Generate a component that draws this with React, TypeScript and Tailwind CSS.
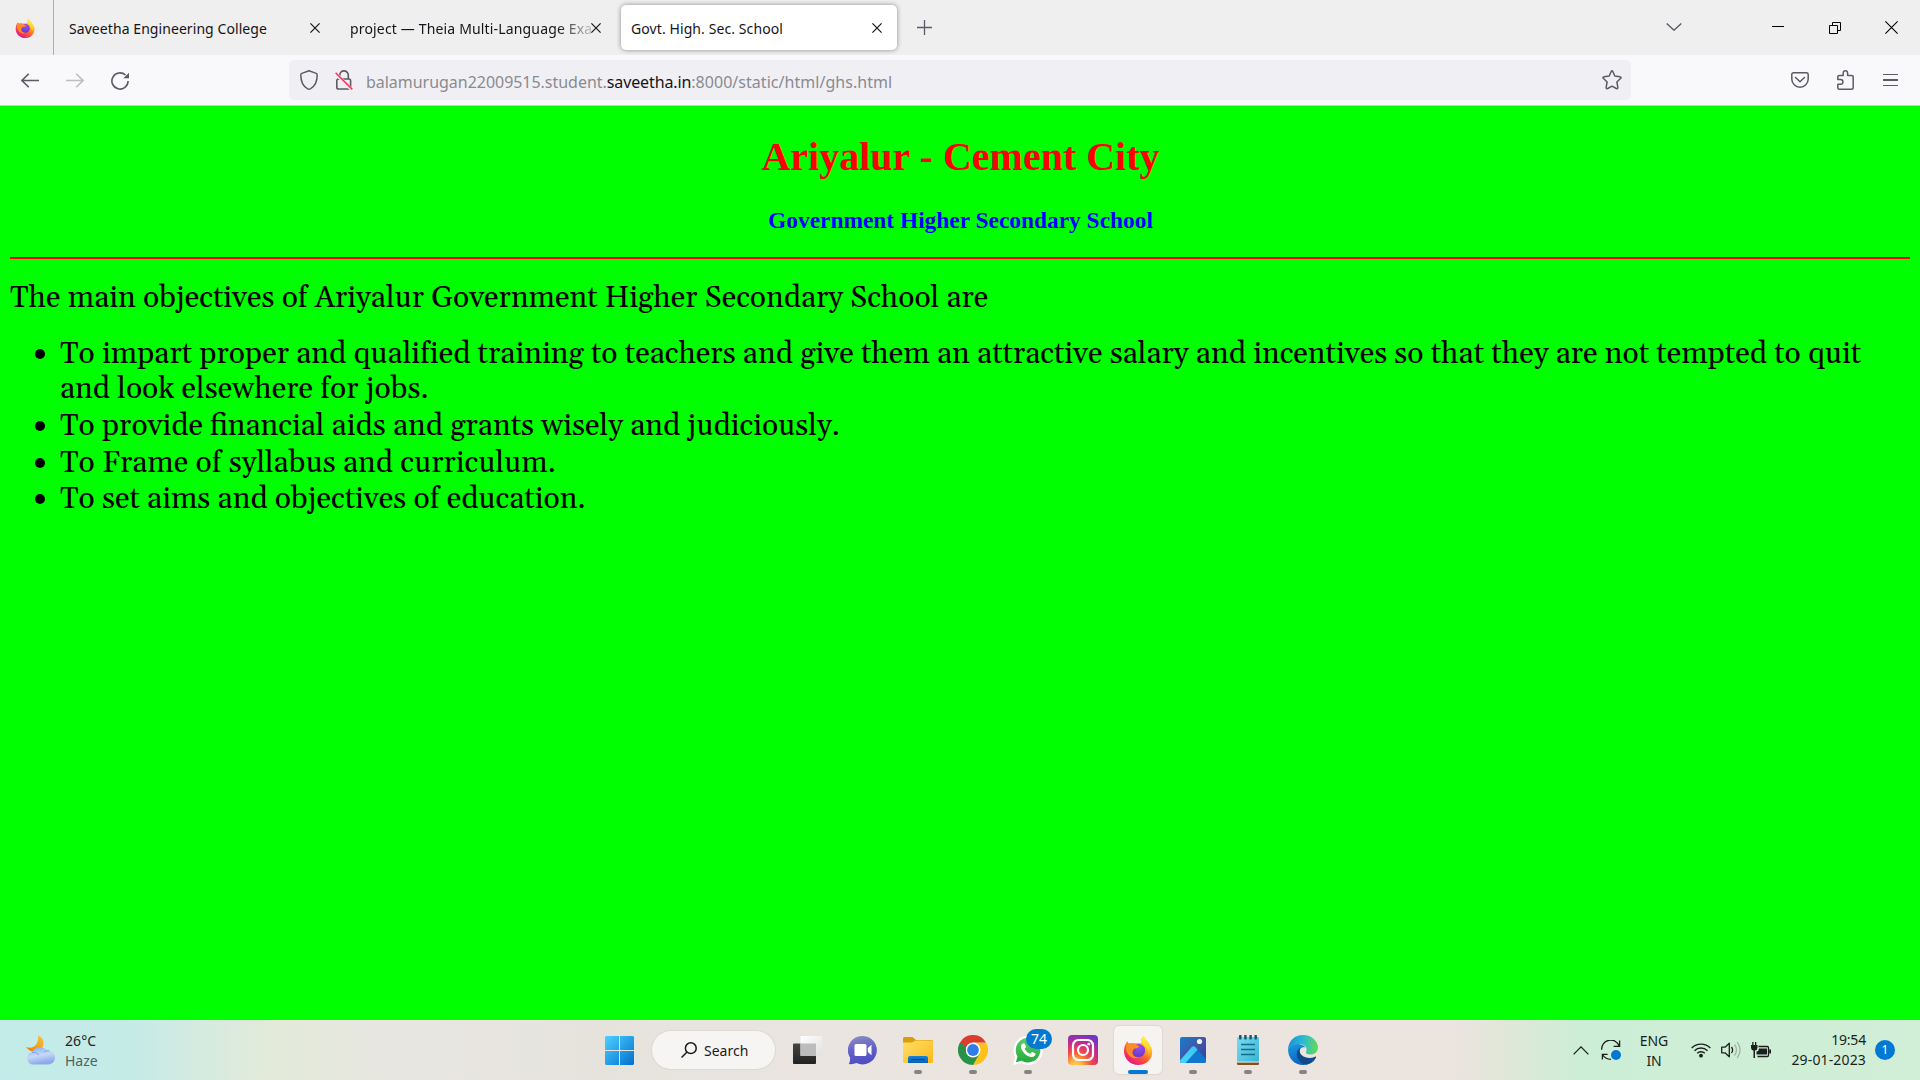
import React from "react";

type SvgProps = { className?: string };

function Firefox({ className }: SvgProps) {
  return (
    <svg className={className} viewBox="0 0 30 30">
      <defs>
        <linearGradient id="ffBody" x1="0.85" y1="0.08" x2="0.25" y2="0.95">
          <stop offset="0" stopColor="#fff44f" />
          <stop offset="0.35" stopColor="#ffa91e" />
          <stop offset="0.62" stopColor="#ff5a36" />
          <stop offset="1" stopColor="#e31587" />
        </linearGradient>
        <linearGradient id="ffFlame" x1="0.6" y1="0" x2="0.5" y2="1">
          <stop offset="0" stopColor="#fff44f" />
          <stop offset="0.6" stopColor="#ffd02e" />
          <stop offset="1" stopColor="#ff8a1e" />
        </linearGradient>
        <radialGradient id="ffGlobe" cx="0.55" cy="0.25" r="0.8">
          <stop offset="0" stopColor="#a34af0" />
          <stop offset="1" stopColor="#5b3bc4" />
        </radialGradient>
      </defs>
      <path d="M4.5 6.2C4.8 7.4 5.3 8 6 8.6 7.6 7.9 9.5 7.8 11 8.2L18 8C17.5 4.500 19 2 21 .8 21.500 4 24 5.500 25.500 7.800 26.200 8.400 26.500 9 26.800 9.800 29.500 14 30 18 28.200 22 26 27 21 30 15.500 30 7.500 30 1 24 1 16 1 12.500 2.200 8.800 4.500 6.200Z" fill="url(#ffBody)" />
      <circle cx="15.500" cy="15.500" r="6.600" fill="url(#ffGlobe)" />
      <path d="M18 8C17.500 4.500 19 2 21 .8 21.500 4 24 5.500 25.500 7.800 28.500 12.500 28.300 18 25 22 26 16 23.500 12 18 8Z" fill="url(#ffFlame)" />
      <path d="M3.500 7.500C6 9.200 8 8.500 10.500 8.800 13 9 14.500 10.300 16.200 11.500 15.500 12.800 13.500 13.200 12 13.600 10.500 14 10 15.200 9.500 17 8.500 20 12 22.500 15.500 22.300 10 25.500 4 20 3 14Z" fill="#ff8c26" />
    </svg>
  );
}

function CloseIcon({ className }: SvgProps) {
  return (
    <svg className={className} viewBox="0 0 10 10" fill="none" stroke="currentColor" strokeWidth="1.2">
      <path d="M.4.4 9.600 9.600M9.600.4.4 9.600" />
    </svg>
  );
}

function TabStrip() {
  return (
    <div className="flex h-[55px] w-full bg-[#efefef] text-[14px] text-[#15141a]">
      <div className="flex w-[53px] shrink-0 items-center pl-[15px]">
        <Firefox className="size-5" />
      </div>
      <div className="w-px shrink-0 bg-[#aeaeae]" />
      <div className="flex h-[55px] w-[281px] shrink-0 items-center pl-[15px]">
        <span className="w-[241px] whitespace-nowrap pt-[3px] leading-5 tracking-[0.07px]">Saveetha Engineering College</span>
        <CloseIcon className="size-2.5" />
      </div>
      <div className="flex h-[55px] w-[286px] shrink-0 items-center pl-[15px]">
        <span className="w-[241px] overflow-hidden whitespace-nowrap pt-[3px] leading-5 tracking-[0.16px] [mask-image:linear-gradient(to_right,#000_86%,rgba(0,0,0,0.2)_100%)]">
          project — Theia Multi-Language Exam
        </span>
        <CloseIcon className="size-2.5" />
      </div>
      <div className="mt-[5px] flex h-[45px] w-[276px] shrink-0 items-center rounded-[5px] bg-white pl-2.5 shadow-[0_0_5px_rgba(0,0,0,0.42)]">
        <span className="w-[241px] whitespace-nowrap pt-[3px] leading-5 tracking-[0.09px]">Govt. High. Sec. School</span>
        <CloseIcon className="size-2.5" />
      </div>
      <div className="flex flex-1 items-center pl-5">
        <svg className="size-[15px] text-[#5b5b66]" viewBox="0 0 15 15" fill="none" stroke="currentColor" strokeWidth="1.300">
          <path d="M7.500 0v15M0 7.500h15" />
        </svg>
      </div>
      <div className="flex h-[53px] w-[254px] shrink-0 items-center">
        <svg className="h-2 w-4 text-[#5b5b66]" viewBox="0 0 16 8" fill="none" stroke="currentColor" strokeWidth="1.400">
          <path d="M.7.5 8 7.200 15.300.5" />
        </svg>
        <span className="ml-[90px] h-px w-3 bg-black" />
        <svg className="ml-[45px] size-3 translate-y-px" viewBox="0 0 12 12" fill="none" stroke="#000">
          <path d="M.5 3.500h8v8h-8zM3.500 3.500v-3h8v8h-3" />
        </svg>
        <svg className="ml-11 size-[13px] translate-y-px" viewBox="0 0 13 13" fill="none" stroke="#000" strokeWidth="1.100">
          <path d="M.4.4 12.600 12.600M12.600.4.4 12.600" />
        </svg>
      </div>
    </div>
  );
}

function NavBar() {
  return (
    <div className="flex h-[51px] w-full items-center border-b border-[#cccccf] bg-[#f9f9fb] text-[#5b5b66]">
      <div className="flex w-[289px] shrink-0 items-center pl-[21px]">
        <svg className="h-[15px] w-[18px]" viewBox="0 0 18 15" fill="none" stroke="currentColor" strokeWidth="1.600">
          <path d="M18 7.500H1M7.800.7 1 7.500l6.800 6.800" />
        </svg>
        <svg className="ml-[27px] h-[15px] w-[18px] text-[#bdbdc3]" viewBox="0 0 18 15" fill="none" stroke="currentColor" strokeWidth="1.600">
          <path d="M0 7.500h17M10.200.7 17 7.500l-6.800 6.800" />
        </svg>
        <svg className="ml-[27px] size-[18px] translate-y-px" viewBox="0 0 18 18" fill="none" stroke="currentColor" strokeWidth="1.600">
          <path d="M14.500 3A8.100 8.100 0 1 0 17.100 9" />
          <path d="M18 .8v5.400h-5.600z" fill="currentColor" stroke="none" />
        </svg>
      </div>
      <div className="flex h-10 w-[1342px] shrink-0 items-center rounded-[5px] bg-[#f0f0f4]">
        <svg className="ml-[11px] h-5 w-[18px]" viewBox="0 0 18 20" fill="none" stroke="currentColor" strokeWidth="1.500" strokeLinejoin="round">
          <path d="M9 .8 16.200 3.400Q17.200 3.800 17.200 4.900C17.200 11 15.500 16 10.300 18.800Q9 19.500 7.700 18.800C2.500 16 .8 11 .8 4.900Q.8 3.800 1.800 3.400Z" />
        </svg>
        <svg className="ml-[17px] h-5 w-[18px]" viewBox="0 0 18 20" fill="none" stroke="currentColor" strokeWidth="1.600">
          <path d="M4.700 9V5.200a4.300 4.300 0 0 1 8.600 0V9" />
          <rect x="1.800" y="9" width="13.800" height="10" rx="1.800" />
          <path d="M.3 3.200 16.700 19.600" stroke="#f0f0f4" strokeWidth="3.200" />
          <path d="M.6 2.800 17.300 19.400" stroke="#ff335e" strokeWidth="1.600" />
        </svg>
        <div className="ml-[13px] flex-1 whitespace-nowrap pt-[3px] text-[16px] leading-6 text-[#8a8a90]">
          <span className="tracking-[-0.03px]">balamurugan22009515.student.</span>
          <span className="tracking-[-0.12px] text-[#15141a]">saveetha.in</span>
          <span className="tracking-[0.04px]">:8000/static/html/ghs.html</span>
        </div>
        <svg className="mr-[9px] h-5 w-5" viewBox="0 0 20 20" fill="none" stroke="currentColor" strokeWidth="1.500" strokeLinejoin="round">
          <path d="M9.200 1.500Q10 .2 10.800 1.500L12.800 6 17.800 6.700Q19.900 7.100 18.500 8.500L14.900 12l.9 5.200Q16 19.200 14.300 18.500L10 16.200 5.700 18.500Q4 19.200 4.200 17.200L5.100 12 1.500 8.500Q.1 7.100 2.200 6.700L7.200 6Z" />
        </svg>
      </div>
      <svg className="ml-40 h-4 w-[18px]" viewBox="0 0 18 16" fill="none" stroke="currentColor" strokeWidth="1.500" strokeLinecap="round" strokeLinejoin="round">
        <path d="M2.500.8h13Q17.200.8 17.200 2.500V7a8.200 8.200 0 0 1-16.400 0V2.500Q.8.8 2.500.8Z" />
        <path d="M4.600 5.500 9 9.700l4.400-4.200" />
      </svg>
      <svg className="ml-7 h-5 w-[17px]" viewBox="0 0 17 20" fill="none" stroke="currentColor" strokeWidth="1.500" strokeLinejoin="round">
        <path d="M6.200 5.600V3a2.200 2.200 0 0 1 4.400 0v2.600H14.700Q16.200 5.600 16.200 7.100V17.700Q16.200 19.200 14.700 19.200H2.300Q.8 19.200.8 17.700V14.200H3.600a2.300 2.300 0 0 0 0-4.600H.8V7.100Q.8 5.600 2.300 5.600Z" />
      </svg>
      <div className="ml-[29px] flex w-[15px] flex-col gap-1">
        <span className="h-[1.500px] bg-[#5b5b66]" />
        <span className="h-[1.500px] bg-[#5b5b66]" />
        <span className="h-[1.500px] bg-[#5b5b66]" />
      </div>
    </div>
  );
}

const objectives = [
  "To provide financial aids and grants wisely and judiciously.",
  "To Frame of syllabus and curriculum.",
  "To set aims and objectives of education.",
];

function Bullet() {
  return <span className="ml-[25px] mr-[16px] mt-[12px] size-[10px] shrink-0 rounded-full bg-black" />;
}

function SchoolPage() {
  return (
    <main className="h-[914px] bg-[#00ff00] px-2.5 pt-[28px] text-black">
      <h1 className="pl-px text-center font-['Liberation_Serif',serif] text-[40px] font-bold leading-[46px] text-[#ff0000]">Ariyalur - Cement City</h1>
      <h3 className="mt-[27px] pl-px text-center font-['Liberation_Serif',serif] text-[23.400px] font-bold leading-[27px] text-[#0000ff]">
        Government Higher Secondary School
      </h3>
      <div className="mt-[23px] h-0.5 bg-[#ff0000]" />
      <div className="font-[Gelasio,Georgia,serif] text-[30px] leading-[35px]">
        <p className="mt-[22px]">The main objectives of Ariyalur Government Higher Secondary School are</p>
        <ul className="mt-[21px]">
          <li className="flex h-[72px]">
            <Bullet />
            <span className="-ml-px whitespace-nowrap tracking-[0.006px]">
              To impart proper and qualified training to teachers and give them an attractive salary and incentives so that they are not tempted to quit
              <br />
              and look elsewhere for jobs.
            </span>
          </li>
          {objectives.map((text) => (
            <li key={text} className="flex h-[36.500px]">
              <Bullet />
              <span className="-ml-px whitespace-nowrap">{text}</span>
            </li>
          ))}
        </ul>
      </div>
    </main>
  );
}

function Weather() {
  return (
    <svg className="h-[30px] w-[30px]" viewBox="0 0 30 30">
      <defs>
        <linearGradient id="moon" x1="1" y1="0" x2="0" y2="1">
          <stop offset="0" stopColor="#f8c63d" />
          <stop offset="1" stopColor="#ec7a12" />
        </linearGradient>
        <linearGradient id="cloud" x1="0" y1="0" x2="0.300" y2="1">
          <stop offset="0" stopColor="#86aef0" />
          <stop offset="0.550" stopColor="#c6d9f8" />
          <stop offset="1" stopColor="#8aa9ea" />
        </linearGradient>
      </defs>
      <path d="M12 .5C19 3 19 11 14.500 14.500 10 18 3.500 17.500 0 12 4 13.500 8.500 12.500 10.500 9 12 6 12.500 3.500 12 .5Z" fill="url(#moon)" />
      <path d="M6.500 29.500A6.300 6.300 0 0 1 6.500 17 8.800 8.800 0 0 1 21 15.500 7 7 0 1 1 23 29.500Z" fill="url(#cloud)" />
      <path d="M6 17.500Q10 16.500 13 20M18 17Q20 15.500 23 15.500" stroke="#7ba2e9" strokeWidth=".9" fill="none" />
    </svg>
  );
}

function WindowsLogo() {
  return (
    <svg className="size-[29px]" viewBox="0 0 29 29">
      <defs>
        <linearGradient id="win" gradientUnits="userSpaceOnUse" x1="0" y1="0" x2="29" y2="29">
          <stop offset="0" stopColor="#4fd0ff" />
          <stop offset="1" stopColor="#0070cf" />
        </linearGradient>
      </defs>
      <path d="M1 0h13v14H0V1zM15 0h13l1 1v13H15zM0 15h14v14H1l-1-1zM15 15h14v13l-1 1H15z" fill="url(#win)" />
    </svg>
  );
}

function TaskView() {
  return (
    <svg className="size-[30px]" viewBox="0 0 30 30">
      <defs>
        <linearGradient id="tv" x1="0" y1="0" x2="0" y2="1"><stop stopColor="#454545" /><stop offset="1" stopColor="#222" /></linearGradient>
        <linearGradient id="tvw" x1="0" y1="0" x2="1" y2="1"><stop stopColor="#fff" /><stop offset="1" stopColor="#e0e0e0" /></linearGradient>
      </defs>
      <rect x="0" y="8.500" width="23" height="20.500" rx="1" fill="url(#tv)" />
      <rect x="7.500" y="1" width="22" height="20" rx="1" fill="url(#tvw)" />
      <path d="M7.500 8.500H23V21H7.500z" fill="#bcbcbc" />
    </svg>
  );
}

function Chat() {
  return (
    <svg className="size-[30px]" viewBox="0 0 30 30">
      <defs><linearGradient id="chat" x1="0.300" y1="0" x2="0.500" y2="1"><stop stopColor="#8b8bc2" /><stop offset="0.500" stopColor="#6260c8" /><stop offset="1" stopColor="#4f4bc4" /></linearGradient></defs>
      <path d="M15 1a14.200 14.200 0 1 1-6.500 27Q5 29.500 .8 29 2.500 26 2 22.500A14.200 14.200 0 0 1 15 1Z" fill="url(#chat)" />
      <rect x="6.500" y="9" width="12" height="12" rx="1.600" fill="#fff" />
      <path d="M19.800 13 23.500 9.700V20.300L19.800 17z" fill="#fff" />
    </svg>
  );
}

function Folder() {
  return (
    <svg className="size-[30px]" viewBox="0 0 30 30">
      <defs>
        <linearGradient id="fold" x1="0" y1="0" x2="1" y2="1"><stop stopColor="#ffdf6b" /><stop offset="1" stopColor="#fbb917" /></linearGradient>
        <linearGradient id="foldb" x1="0" y1="0" x2="0" y2="1"><stop stopColor="#1583dc" /><stop offset="1" stopColor="#0a61b3" /></linearGradient>
      </defs>
      <path d="M0 3.500Q0 2 1.500 2H9.500L13 5H28.500Q30 5 30 6.500V12H0Z" fill="#dd9c0a" />
      <path d="M0 7.500H9L12.500 5.500H28.500Q30 5.500 30 7V26.500Q30 28 28.500 28H1.500Q0 28 0 26.500Z" fill="url(#fold)" />
      <path d="M5 28V23Q5 21 7 21H23Q25 21 25 23V28Z" fill="url(#foldb)" />
      <path d="M8.500 24.500h13" stroke="#054785" strokeWidth="1.200" />
    </svg>
  );
}

function Chrome() {
  return (
    <svg className="size-[30px]" viewBox="0 0 30 30">
      <path d="M28 7.500A15 15 0 0 1 15 30L15 15 15 7.500Z" fill="#fcc21b" />
      <path d="M2 7.500A15 15 0 0 0 15 30L21.500 18.800 15 15Z" fill="#26924a" />
      <path d="M2 7.500A15 15 0 0 1 28 7.500H15L8.500 18.700Z" fill="#dc3b2e" />
      <circle cx="15" cy="15" r="7.500" fill="#fff" />
      <circle cx="15" cy="15" r="5.900" fill="#2f7de9" />
      <path d="M2 7.500 8.500 18.700 7.600 14A7.500 7.500 0 0 1 8.300 11.500Z" fill="#26924a" />
    </svg>
  );
}

function WhatsApp() {
  return (
    <div className="relative size-[30px]">
      <svg className="size-[30px]" viewBox="0 0 30 30">
        <defs><linearGradient id="wa" x1="0" y1="0" x2="0" y2="1"><stop stopColor="#5bcf68" /><stop offset="1" stopColor="#25a93d" /></linearGradient></defs>
        <path d="M0 30 2.200 22A14.600 14.600 0 1 1 8 28Z" fill="#fff" />
        <path d="M2.900 27.200 4.500 21.500A12.300 12.300 0 1 1 8.700 25.700Z" fill="url(#wa)" />
        <path d="M10.500 8.300C8 9 7.300 11.500 8.400 14 10.200 18 13.500 21 17.800 22 20.500 22.500 22.500 20.800 22.600 18.500L18.900 16.700 17.200 18.800C14.800 18 12.600 15.800 11.700 13.800L13.100 12 11.600 8.500Z" fill="#fff" />
      </svg>
      <span className="absolute -top-1.5 left-[13px] flex h-5 w-[26px] items-center justify-center rounded-full bg-[#0078d4] text-[14px] leading-5 text-white">74</span>
    </div>
  );
}

function Instagram() {
  return (
    <svg className="size-[30px]" viewBox="0 0 30 30">
      <defs>
        <radialGradient id="ig" cx="0.270" cy="1.050" r="1.100">
          <stop offset="0" stopColor="#ffd95a" /><stop offset="0.200" stopColor="#fdae3f" /><stop offset="0.450" stopColor="#f2503f" /><stop offset="0.700" stopColor="#cc2b86" /><stop offset="1" stopColor="#7136c8" />
        </radialGradient>
      </defs>
      <rect width="30" height="30" rx="4" fill="url(#ig)" />
      <rect x="5" y="5" width="20" height="20" rx="5.500" fill="none" stroke="#fff" strokeWidth="2.200" />
      <circle cx="15" cy="15" r="5" fill="none" stroke="#fff" strokeWidth="2.200" />
      <circle cx="20.800" cy="9.200" r="1.400" fill="#fff" />
    </svg>
  );
}

function Photos() {
  return (
    <svg className="size-[30px]" viewBox="0 0 30 30">
      <defs>
        <linearGradient id="ph" x1="0" y1="0" x2="1" y2="1"><stop stopColor="#1181cb" /><stop offset="0.500" stopColor="#4555a9" /><stop offset="1" stopColor="#26459a" /></linearGradient>
        <linearGradient id="phm" x1="1" y1="0" x2="0" y2="1"><stop stopColor="#3fc3ee" /><stop offset="1" stopColor="#45d6fb" /></linearGradient>
      </defs>
      <rect x="2" y="2" width="26" height="26" rx="2" fill="url(#ph)" />
      <path d="M2 25.500 13.600 12.300Q15.500 10.400 17.400 12.300L28 24V26Q28 28 26 28H4Q2 28 2 26Z" fill="#1176ce" />
      <path d="M2 25.500 13.600 12.300Q15.500 10.400 17.400 12.300L19.500 14.700 7.500 28H4Q2 28 2 26Z" fill="url(#phm)" />
      <circle cx="21.500" cy="6.500" r="2.600" fill="#f4f8fd" />
    </svg>
  );
}

function Notepad() {
  return (
    <svg className="size-[30px]" viewBox="0 0 30 30">
      <defs><linearGradient id="np" x1="0" y1="0" x2="1" y2="1"><stop stopColor="#7adcf0" /><stop offset="1" stopColor="#36b3d3" /></linearGradient></defs>
      <rect x="4" y="26" width="22" height="4" rx="1" fill="#8d4d17" />
      <rect x="4" y="2" width="22" height="25.500" rx="1" fill="url(#np)" />
      <path d="M4 26.500h22v1H4z" fill="#e8e0dc" />
      <path d="M8 9.500h14M8 14.500h14M8 19.500h14" stroke="#176b8b" strokeWidth="1.700" />
      <path d="M7.300.8v2.600M12.400.8v2.600M17.600.8v2.600M22.700.8v2.600" stroke="#14536d" strokeWidth="2.400" strokeLinecap="round" />
    </svg>
  );
}

function Edge() {
  return (
    <svg className="size-[30px]" viewBox="0 0 30 30">
      <defs>
        <linearGradient id="edT" x1="0" y1="0.400" x2="1" y2="0.500"><stop stopColor="#1a91dd" /><stop offset="0.500" stopColor="#2bbcd0" /><stop offset="1" stopColor="#62da55" /></linearGradient>
        <linearGradient id="edB" x1="0" y1="0" x2="0.500" y2="1"><stop stopColor="#1a9be4" /><stop offset="1" stopColor="#0a5fbd" /></linearGradient>
      </defs>
      <path d="M0 14C1 5 7 0 15 0 24 0 30 6.500 30 12.500 30 17 26.500 19.500 22.500 19.500 19 19.500 17.500 18.300 18 17.200 20 13 17 9 11.500 9 6 9 2 11 0 14Z" fill="url(#edT)" />
      <path d="M0 14C2 10.500 6 8.800 10.500 9 14 9.200 16.500 10.700 17.500 12.500 13.500 11.300 11 14.500 11 18 11 23 14.500 27 20 27.500 23 27.700 25.500 26 27.500 24.200 24.500 28 20 30 15 30 6.500 30 0 23.500 0 14Z" fill="url(#edB)" />
      <path d="M12.500 12.800C9 14.500 8 18.500 9.500 22.500 11.500 27.500 16 30 20 29 23.500 28 26.500 25.500 28 22.500 28.300 21.700 27.700 21.300 27 21.700 21 24.500 13.500 22 12 17.500 11.500 15.700 11.800 14 12.500 12.800Z" fill="#114a8b" />
    </svg>
  );
}

const apps: { name: string; Icon: React.ComponentType<SvgProps>; running?: boolean }[] = [
  { name: "taskview", Icon: TaskView },
  { name: "chat", Icon: Chat },
  { name: "files", Icon: Folder, running: true },
  { name: "chrome", Icon: Chrome, running: true },
  { name: "whatsapp", Icon: WhatsApp, running: true },
  { name: "instagram", Icon: Instagram },
  { name: "firefox", Icon: Firefox, running: true },
  { name: "photos", Icon: Photos, running: true },
  { name: "notepad", Icon: Notepad, running: true },
  { name: "edge", Icon: Edge, running: true },
];

function AppButton({ name, Icon, running }: (typeof apps)[number]) {
  const active = name === "firefox";
  return (
    <div className="flex h-[60px] w-[55px] shrink-0 flex-col items-center pt-1.5">
      <div className={active ? "flex h-12 w-12 flex-col items-center rounded-[5px] bg-[#f6f4f1] pt-[9px] shadow-[0_0_1px_1px_rgba(0,0,0,0.06)]" : "flex h-12 w-12 flex-col items-center pt-[9px]"}>
        <Icon className="size-[30px] shrink-0" />
        {running && <span className={active ? "mt-[5px] h-1 w-5 shrink-0 rounded-full bg-[#0078d4]" : "mt-[5px] h-1 w-2 shrink-0 rounded-full bg-[#868482]"} />}
      </div>
    </div>
  );
}

function Tray() {
  return (
    <div className="flex h-[60px] flex-1 items-center text-[14px] leading-5 text-[#1b1f1c]">
      <svg className="h-[9px] w-4" viewBox="0 0 16 9" fill="none" stroke="currentColor" strokeWidth="1.300">
        <path d="M.6 8.400 8 .9l7.400 7.500" />
      </svg>
      <svg className="ml-3 size-[20px]" viewBox="0 0 20 20" fill="none" stroke="currentColor" strokeWidth="1.300">
        <path d="M.7 9.800A9 9 0 0 1 18.200 6.200M18.600.4v6h-6M1.400 19.500v-5.200h5.200M1.800 15Q4.500 19.300 10 19.300" />
        <circle cx="15" cy="15" r="5" fill="#0078d4" stroke="none" />
      </svg>
      <div className="ml-[14px] w-[38px] pt-px text-center tracking-[-0.1px]">
        ENG
        <br />
        IN
      </div>
      <svg className="ml-[18px] h-4 w-5" viewBox="0 0 20 16" fill="none" stroke="currentColor" strokeWidth="1.400">
        <path d="M.7 6A13 13 0 0 1 19.300 6M3.500 8.700A9.200 9.200 0 0 1 16.500 8.700M6.200 11.300A5.300 5.300 0 0 1 13.800 11.300" />
        <circle cx="10" cy="13.700" r="1.900" fill="currentColor" stroke="none" />
      </svg>
      <svg className="ml-2.5 h-[18px] w-5" viewBox="0 0 20 18" fill="none" stroke="currentColor" strokeWidth="1.300" strokeLinejoin="round">
        <path d="M.7 6.200H4L8.300 2.200V15.800L4 11.800H.7ZM10.500 6Q12.700 9 10.500 12" />
        <path d="M13.500 3.500Q17.500 9 13.500 14.500M16.200 1.200Q22 9 16.200 16.800" stroke="#9fb5a4" />
      </svg>
      <svg className="ml-2.5 h-4 w-5" viewBox="0 0 20 16" fill="none" stroke="currentColor">
        <path d="M7.500 4.500H16.300Q17.500 4.500 17.500 5.700V13.300Q17.500 14.500 16.300 14.500H6.500" strokeWidth="1.300" />
        <path d="M8 6.500h8v6H5.500V9.500Q8 9 8 6.500ZM18.200 7.500H20v4h-1.800zM0 3H6.500V5.500Q6.500 8 4 8.500V16H2.500V8.500Q0 8 0 5.500ZM1.200 0h1.300v3H1.200zM4 0h1.300v3H4z" fill="currentColor" stroke="none" />
      </svg>
      <div className="ml-4 w-[79px] text-right">
        <div className="tracking-[-0.2px]">19:54</div>
        <div className="tracking-[0.15px]">29-01-2023</div>
      </div>
      <span className="ml-[9px] flex size-5 items-center justify-center rounded-full bg-[#0078d4] text-[12px] leading-5 text-white">1</span>
    </div>
  );
}

function Taskbar() {
  return (
    <footer className="flex h-[60px] w-full bg-[linear-gradient(90deg,#c3ebe9_0px,#c5ebe7_130px,#e3ead9_270px,#e8e6e1_400px,#e6e3dd_600px,#ebe5e0_900px,#ebe4df_1450px,#e0e7d8_1505px,#cdeed6_1580px,#d1eed7_1920px)]">
      <div className="flex w-[592px] shrink-0 pl-[26px]">
        <div className="pt-[15px]">
          <Weather />
        </div>
        <div className="ml-[9px] pt-[11px] text-[14px] leading-5 text-[#1b2425]">
          <div className="tracking-[0.1px]">26°C</div>
          <div className="text-[#4f6364]">Haze</div>
        </div>
      </div>
      <div className="flex w-[60px] shrink-0 pl-[13px] pt-4">
        <WindowsLogo />
      </div>
      <div className="mt-[11px] flex h-[38px] w-[123px] shrink-0 items-center rounded-full bg-[#f6f5f3] pl-[29px] shadow-[0_0_1px_1px_rgba(0,0,0,0.05)]">
        <svg className="size-4" viewBox="0 0 16 16" fill="none" stroke="#1b1b1b" strokeWidth="1.500">
          <circle cx="9.800" cy="6.200" r="5.400" />
          <path d="M6 10 .5 15.500" />
        </svg>
        <span className="ml-[7px] pt-px text-[14px] leading-5 text-[#1b1b1b]">Search</span>
      </div>
      <div className="flex w-[798px] shrink-0 pl-[5.500px]">
        {apps.map((app) => (
          <AppButton key={app.name} {...app} />
        ))}
      </div>
      <Tray />
    </footer>
  );
}

export default function App() {
  return (
    <div className="flex h-[1080px] w-[1920px] flex-col overflow-hidden font-['Noto_Sans','Open_Sans',sans-serif]">
      <TabStrip />
      <NavBar />
      <SchoolPage />
      <Taskbar />
    </div>
  );
}
